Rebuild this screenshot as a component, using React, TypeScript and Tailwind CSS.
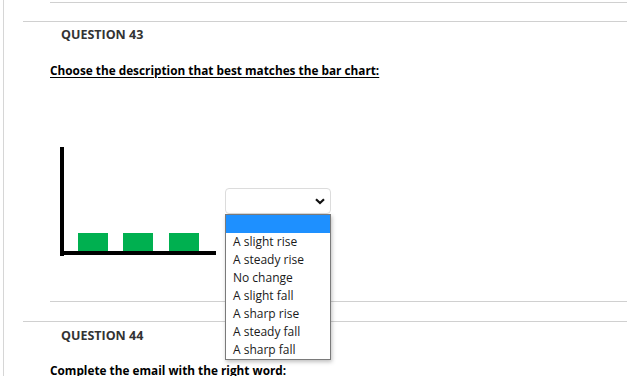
import React from 'react';

const OPTIONS = [
  'A slight rise',
  'A steady rise',
  'No change',
  'A slight fall',
  'A sharp rise',
  'A steady fall',
  'A sharp fall',
];

function BarChart() {
  return (
    <svg width="156" height="109" viewBox="0 0 156 109" className="block shrink-0">
      <rect x="18" y="86" width="30" height="18" fill="#00b050" />
      <rect x="63" y="86" width="30" height="18" fill="#00b050" />
      <rect x="109" y="86" width="30" height="18" fill="#00b050" />
      <rect x="0" y="0" width="4" height="109" fill="#000" />
      <rect x="0" y="104" width="156" height="4" fill="#000" />
    </svg>
  );
}

function Chevron() {
  return (
    <svg width="10" height="7" viewBox="0 0 10 7" className="block">
      <path d="M1 1.2 L5 5 L9 1.2" fill="none" stroke="#111" strokeWidth="2.2" />
    </svg>
  );
}

function Dropdown() {
  return (
    <div className="absolute left-[225px] top-[214px] w-[106px] border border-[#7a7a7a] bg-white shadow-[1px_2px_4px_rgba(0,0,0,0.25)] text-[12px] leading-[18px] text-[#1a1a1a]">
      <div className="h-[18px] bg-[#1e90ff]" />
      {OPTIONS.map((o) => (
        <div key={o} className="h-[18px] pl-[7px] whitespace-nowrap">
          {o}
        </div>
      ))}
    </div>
  );
}

export default function App() {
  return (
    <div
      className="relative h-[376px] w-[627px] overflow-hidden bg-white"
      style={{ fontFamily: '"Open Sans", "Noto Sans", sans-serif' }}
    >
      <div className="ml-[3px] h-full border-l border-[#d6d6d6]">
        <div className="ml-[46px] h-[3px] border-b border-[#d0d0d0]" />

        <div className="mt-[18px] ml-[19px] border-t border-[#d0d0d0]">
          <div className="pl-[38px] pt-[4px] text-[12.5px] leading-[18px] font-bold text-[#333]">
            QUESTION 43
          </div>
          <div className="ml-[27px] border-b border-[#d0d0d0] pb-[45px]">
            <div className="mt-[17px] text-[11.8px] leading-[18px] font-bold text-black underline underline-offset-2">
              Choose the description that best matches the bar chart:
            </div>
            <div className="mt-[68px] ml-[10px] flex items-start">
              <BarChart />
              <div className="ml-[9px] mt-[41px] flex h-[26px] w-[106px] items-center justify-end rounded-[4px] border border-[#dcdcdc] bg-white pr-[5px]">
                <Chevron />
              </div>
            </div>
          </div>
        </div>

        <div className="mt-[19px] ml-[19px] border-t border-[#d0d0d0]">
          <div className="pl-[38px] pt-[5px] text-[12.5px] leading-[18px] font-bold text-[#333]">
            QUESTION 44
          </div>
          <div className="ml-[27px]">
            <div className="mt-[16px] text-[11.8px] leading-[18px] font-bold text-black">
              Complete the email with the right word:
            </div>
          </div>
        </div>
      </div>
      <Dropdown />
    </div>
  );
}
